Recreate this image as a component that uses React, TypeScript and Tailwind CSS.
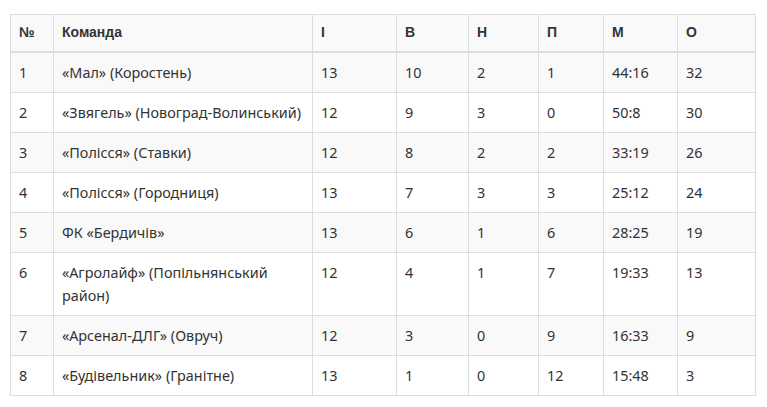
import React from "react";

const rows: [string, string, string, string, string, string, string, string][] = [
  ["1", "«Мал» (Коростень)", "13", "10", "2", "1", "44:16", "32"],
  ["2", "«Звягель» (Новоград-Волинський)", "12", "9", "3", "0", "50:8", "30"],
  ["3", "«Полісся» (Ставки)", "12", "8", "2", "2", "33:19", "26"],
  ["4", "«Полісся» (Городниця)", "13", "7", "3", "3", "25:12", "24"],
  ["5", "ФК «Бердичів»", "13", "6", "1", "6", "28:25", "19"],
  ["6", "«Агролайф» (Попільнянський район)", "12", "4", "1", "7", "19:33", "13"],
  ["7", "«Арсенал-ДЛГ» (Овруч)", "12", "3", "0", "9", "16:33", "9"],
  ["8", "«Будівельник» (Гранітне)", "13", "1", "0", "12", "15:48", "3"],
];

const headers = ["№", "Команда", "І", "В", "Н", "П", "М", "О"];
const widths = ["w-[43px]", "w-[259px]", "w-[84px]", "w-[72px]", "w-[70px]", "w-[65px]", "w-[74px]", "w-[78px]"];

export default function App() {
  return (
    <div className="w-[767px] h-[407px] bg-white pt-[14px] pl-[10px]">
      <table className="table-fixed border-collapse w-[745px] text-[#333]">
        <colgroup>
          {widths.map((w, i) => (
            <col key={i} className={w} />
          ))}
        </colgroup>
        <thead>
          <tr className="bg-[#f9f9f9]">
            {headers.map((h, i) => (
              <th
                key={i}
                className="border border-[#ddd] border-b-2 text-left align-top px-[8px] pt-[7px] pb-[8px] h-[37px] text-[14px] leading-[20px] font-bold font-['Liberation_Sans',Arial,sans-serif]"
              >
                {h}
              </th>
            ))}
          </tr>
        </thead>
        <tbody>
          {rows.map((r, ri) => (
            <tr key={ri} className={ri % 2 === 0 ? "bg-[#f9f9f9]" : "bg-white"}>
              {r.map((c, ci) => (
                <td
                  key={ci}
                  className="border border-[#ddd] text-left align-top px-[8px] py-[8px] text-[14.4px] leading-[23px] font-['Noto_Sans',sans-serif]"
                >
                  {c}
                </td>
              ))}
            </tr>
          ))}
        </tbody>
      </table>
    </div>
  );
}
